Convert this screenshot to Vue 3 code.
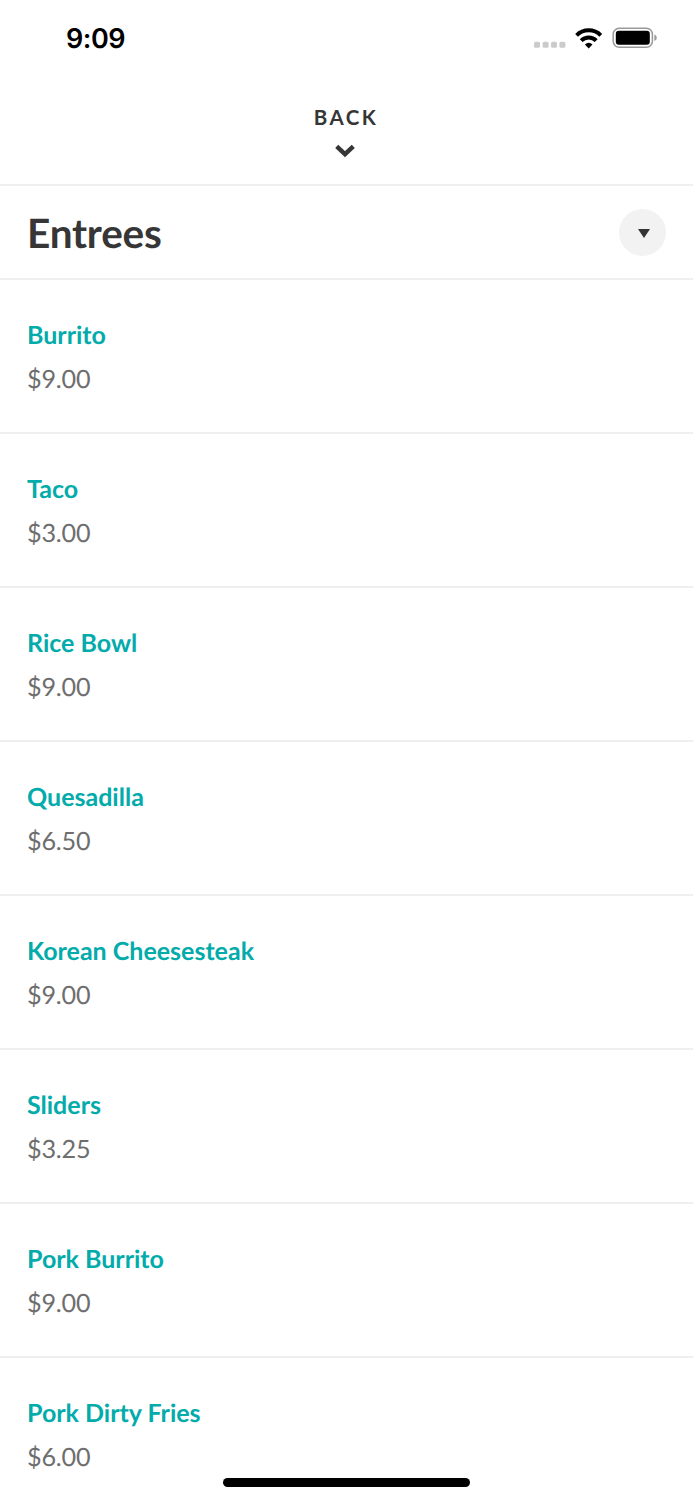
<script setup>
const items = [
  ['Burrito', '$9.00'],
  ['Taco', '$3.00'],
  ['Rice Bowl', '$9.00'],
  ['Quesadilla', '$6.50'],
  ['Korean Cheesesteak', '$9.00'],
  ['Sliders', '$3.25'],
  ['Pork Burrito', '$9.00'],
  ['Pork Dirty Fries', '$6.00'],
]
</script>

<template>
  <main class="screen">
    <div class="status">
      <span class="time">9:09</span>
      <svg class="indicators" width="124" height="24" viewBox="0 0 124 24">
        <g fill="#cbcbcb">
          <rect x="1" y="15.8" width="6" height="6" rx="1.6" />
          <rect x="9.6" y="15.8" width="6" height="6" rx="1.6" />
          <rect x="18" y="15.8" width="6" height="6" rx="1.6" />
          <rect x="26.4" y="15.8" width="6" height="6" rx="1.6" />
        </g>
        <g fill="none" stroke="#000" stroke-width="4">
          <path d="M43.6 9.3a17.2 17.2 0 0 1 24.2 0" />
          <path d="M48.2 14.6a10.6 10.6 0 0 1 15 0" />
        </g>
        <path d="M51.9 18.4a6 6 0 0 1 7.6 0L55.7 22.4Z" />
        <rect x="80.2" y="2.2" width="39.2" height="19" rx="6" fill="none" stroke="#999" stroke-width="1.5" />
        <rect x="82.8" y="4.8" width="34" height="13.9" rx="3" />
        <path d="M121.4 8.4q2.4 1 2.4 3.3t-2.4 3.3z" fill="#999" />
      </svg>
    </div>
    <button class="back">
      <span>BACK</span>
      <svg width="20" height="14" viewBox="0 0 20 14"><path d="M1.7 2.4 10 10.2 18.3 2.4" fill="none" stroke="#363636" stroke-width="4.4" /></svg>
    </button>
    <header class="heading">
      <h1>Entrees</h1>
      <button class="toggle"><svg width="12" height="9" viewBox="0 0 12 9"><path d="M0 0H12L6 9Z" fill="#333" /></svg></button>
    </header>
    <ul class="menu">
      <li v-for="[name, price] in items" :key="name">
        <strong>{{ name }}</strong>
        <span>{{ price }}</span>
      </li>
    </ul>
    <div class="home"></div>
  </main>
</template>

<style>
body { margin: 0; background: #fff; }
</style>
<style scoped>
* { box-sizing: border-box; }
.screen { position: relative; width: 693px; height: 1500px; overflow: hidden; background: #fff; color: #363636; font-family: Lato, sans-serif; text-rendering: geometricPrecision; }
.status { height: 88px; display: flex; justify-content: space-between; align-items: flex-start; padding: 23px 36px 0 66px; }
.time { font: 600 27px/32px Inter, sans-serif; color: #000; letter-spacing: -0.5px; }
.indicators { margin-top: 3px; }
button { border: 0; padding: 0; font: inherit; color: inherit; }
.back { width: 100%; height: 98px; background: none; border-bottom: 2px solid #efefef; display: flex; flex-direction: column; align-items: center; padding: 15px 2px 0 0; }
.back span { font-size: 20.5px; line-height: 28px; font-weight: 700; letter-spacing: 2.5px; padding-left: 1px; }
.back svg { margin: 13px 1px 0 0; }
.heading { height: 94px; border-bottom: 2px solid #efefef; display: flex; justify-content: space-between; align-items: center; padding: 0 27px; }
h1 { margin: 2px 0 0; font-size: 40.5px; line-height: 50px; font-weight: 700; letter-spacing: -0.2px; }
.toggle { width: 47px; height: 47px; border-radius: 50%; background: #f2f2f2; display: flex; align-items: center; justify-content: center; padding: 2px 0 0 2px; }
.menu { list-style: none; margin: 0; padding: 0; }
.menu li { height: 154px; border-bottom: 2px solid #efefef; padding: 37px 27px 0; display: flex; flex-direction: column; }
.menu strong { color: #03abab; font-size: 25px; line-height: 36px; font-weight: 700; }
.menu span { color: #6e6e6e; font-size: 25.2px; line-height: 36px; margin-top: 8px; letter-spacing: -0.2px; }
.home { position: absolute; left: 222.5px; top: 1478px; width: 247.5px; height: 8.5px; border-radius: 5px; background: #000; }
</style>
